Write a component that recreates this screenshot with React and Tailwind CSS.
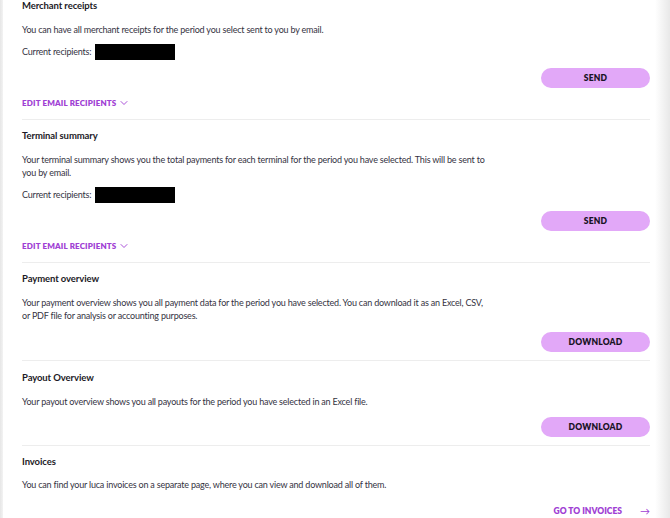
import React from "react";

const font = { fontFamily: "Lato, 'Liberation Sans', sans-serif" };

function Chevron() {
  return (
    <svg width="8" height="6" viewBox="0 0 8 6" className="ml-[4px]" fill="none">
      <path d="M1 1.5 L4 4.5 L7 1.5" stroke="#a040d4" strokeWidth="0.9" strokeLinecap="round" strokeLinejoin="round" />
    </svg>
  );
}

function Btn({ children }) {
  return (
    <div className="flex justify-end">
      <button className="h-[20px] w-[109px] rounded-full bg-[#e2a8f8] text-[8.5px] font-extrabold tracking-[0.02em] text-[#1a1426]">
        {children}
      </button>
    </div>
  );
}

function Heading({ children }) {
  return <div className="text-[9.5px] font-bold leading-[14px] tracking-[-0.01em] text-[#1c1a26]">{children}</div>;
}

function Body({ children, className = "" }) {
  return (
    <div className={"whitespace-nowrap text-[9px] leading-[13px] tracking-[-0.2px] text-[#35333f] " + className}>
      {children}
    </div>
  );
}

function Recipients() {
  return (
    <div className="mt-[8px] flex h-[16px] items-center text-[9px] tracking-[-0.2px] text-[#35333f]">
      <span>Current recipients:</span>
      <span className="ml-[4px] h-[16px] w-[80px] bg-black" />
    </div>
  );
}

function EditLink() {
  return (
    <div className="mt-[8px] flex h-[13px] items-center text-[8px] font-extrabold tracking-[0.02em] text-[#a040d4]">
      EDIT EMAIL RECIPIENTS
      <Chevron />
    </div>
  );
}

function Divider() {
  return <div className="h-px bg-[#ededed]" />;
}

export default function App() {
  return (
    <div className="flex h-[518px] w-[670px] overflow-hidden bg-white" style={font}>
      <div className="w-[3px] bg-gradient-to-r from-[#e6e6e6] to-[#f3f3f3]" />
      <div className="flex-1 pl-[19px] pr-[5px]">
        <section className="-mt-[1px] pb-[10px]">
          <Heading>Merchant receipts</Heading>
          <Body className="mt-[10px]">You can have all merchant receipts for the period you select sent to you by email.</Body>
          <Recipients />
          <div className="mt-[8px]"><Btn>SEND</Btn></div>
          <EditLink />
        </section>
        <Divider />
        <section className="pt-[9px] pb-[10px]">
          <Heading>Terminal summary</Heading>
          <Body className="mt-[10px]">
            Your terminal summary shows you the total payments for each terminal for the period you have selected. This will be sent to
            <br />
            you by email.
          </Body>
          <Recipients />
          <div className="mt-[8px]"><Btn>SEND</Btn></div>
          <EditLink />
        </section>
        <Divider />
        <section className="pt-[9px] pb-[8px]">
          <Heading>Payment overview</Heading>
          <Body className="mt-[10px]">
            Your payment overview shows you all payment data for the period you have selected. You can download it as an Excel, CSV,
            <br />
            or PDF file for analysis or accounting purposes.
          </Body>
          <div className="mt-[10px]"><Btn>DOWNLOAD</Btn></div>
        </section>
        <Divider />
        <section className="pt-[10px] pb-[8px]">
          <Heading>Payout Overview</Heading>
          <Body className="mt-[10px]">Your payout overview shows you all payouts for the period you have selected in an Excel file.</Body>
          <div className="mt-[9px]"><Btn>DOWNLOAD</Btn></div>
        </section>
        <Divider />
        <section className="pt-[9px]">
          <Heading>Invoices</Heading>
          <Body className="mt-[9px]">You can find your luca invoices on a separate page, where you can view and download all of them.</Body>
          <div className="mt-[14px] flex h-[13px] items-center justify-end text-[8.5px] font-extrabold tracking-[0px] text-[#a040d4]">
            GO TO INVOICES
            <span className="ml-[18px] text-[10px] font-normal">→</span>
          </div>
        </section>
      </div>
      <div className="w-[15px] bg-gradient-to-r from-white to-[#e8e8e8]" />
    </div>
  );
}
